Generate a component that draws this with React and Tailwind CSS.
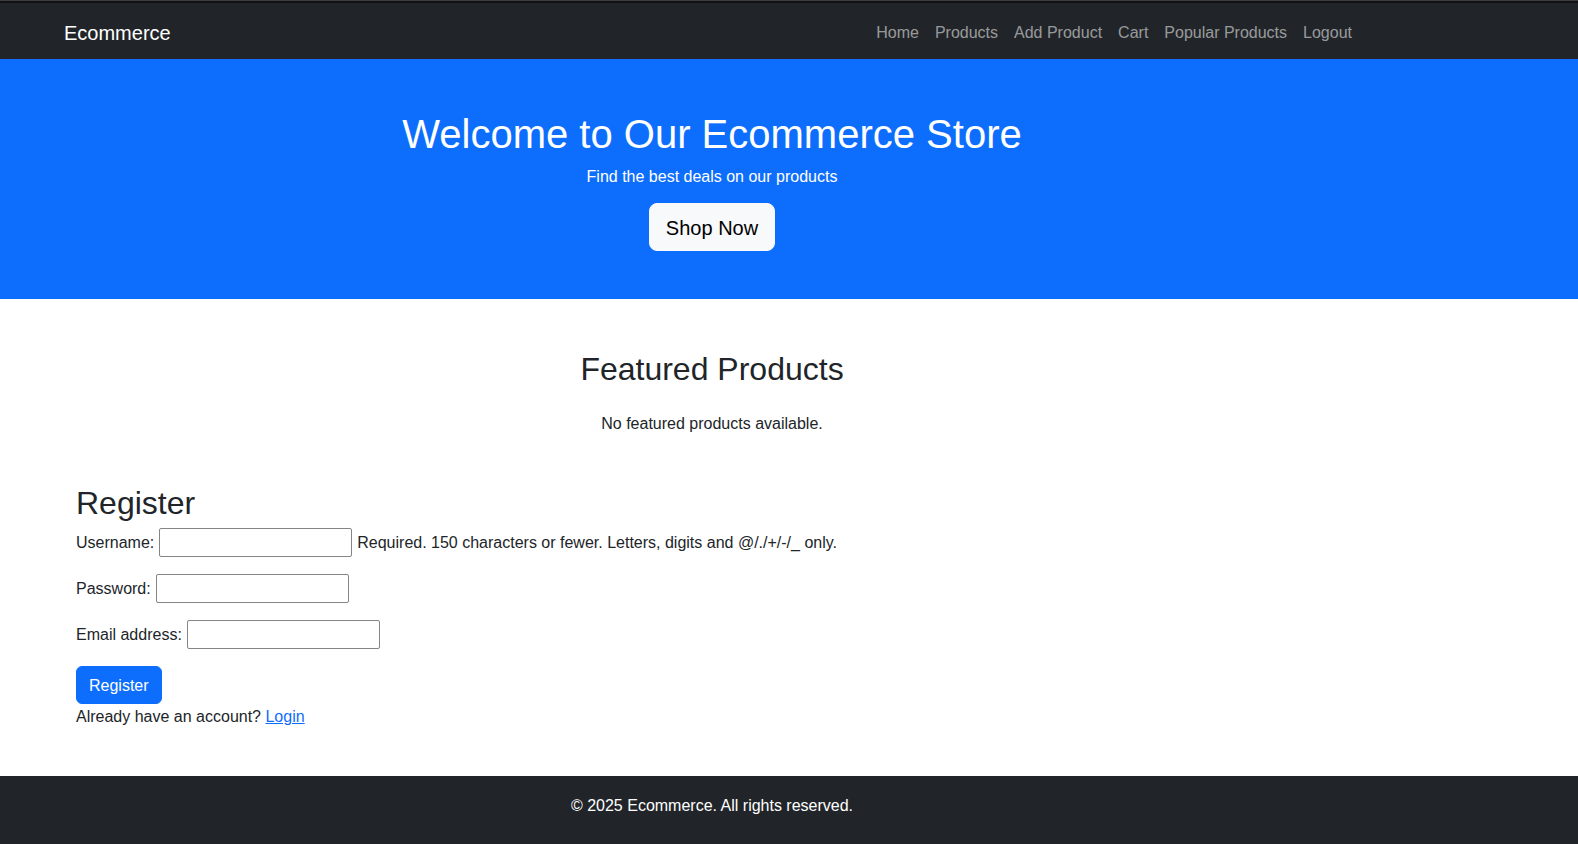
import React from 'react';

const links = ['Home', 'Products', 'Add Product', 'Cart', 'Popular Products', 'Logout'];

function Field({ label, help }) {
  return (
    <p className="flex items-center h-[30px] mb-4">
      <label>{label}</label>
      <input type="text" className="ml-[5px] w-[193px] h-[29px] border border-[#858585] rounded-[2px] bg-white px-[2px] outline-none" />
      {help && <span className="ml-[5px]">{help}</span>}
    </p>
  );
}

export default function App() {
  return (
    <div className="min-h-screen bg-white font-['Liberation_Sans',Arial,sans-serif] text-base leading-6 text-[#212529]">
      <div className="h-px bg-[#3c3c3c]" />
      <div className="h-[2px] bg-[#121212]" />

      <nav className="bg-[#212529] py-2">
        <div className="w-[1320px] ml-[52px] px-3 flex items-center justify-between">
          <a href="#" className="text-xl leading-[30px] pt-[7px] pb-[3px] text-white">Ecommerce</a>
          <ul className="flex">
            {links.map((l) => (
              <li key={l}>
                <a href="#" className="block px-2 pt-[10px] pb-[6px] text-[#ffffff8c]">{l}</a>
              </li>
            ))}
          </ul>
        </div>
      </nav>

      <header className="bg-[#0d6efd] py-12 text-white">
        <div className="w-[1320px] ml-[52px] px-3 text-center">
          <h1 className="text-[40px] leading-[48px] pt-[3px] mb-[5px] font-normal">Welcome to Our Ecommerce Store</h1>
          <p className="pt-[2px] mb-[14px]">Find the best deals on our products</p>
          <a href="#" className="inline-block bg-[#f8f9fa] border border-[#f8f9fa] text-black text-xl leading-[30px] px-4 pt-[9px] pb-[7px] rounded-lg">
            Shop Now
          </a>
        </div>
      </header>

      <section className="w-[1320px] ml-[52px] px-3 mt-12 text-center">
        <h2 className="text-[32px] leading-[38.4px] pt-[3px] mb-6 font-normal">Featured Products</h2>
        <p>No featured products available.</p>
      </section>

      <main className="w-[1320px] ml-[52px] px-3 mt-[45px] mb-12">
        <div className="px-3">
          <h2 className="text-[32px] leading-[38.4px] pt-[3px] mb-[5px] font-normal">Register</h2>
          <form>
            <Field label="Username:" help="Required. 150 characters or fewer. Letters, digits and @/./+/-/_ only." />
            <Field label="Password:" />
            <Field label="Email address:" />
            <button type="button" className="bg-[#0d6efd] border border-[#0d6efd] text-white px-3 pt-[7px] pb-[5px] rounded-md leading-6">
              Register
            </button>
          </form>
          <p className="pt-px -mb-px">
            Already have an account? <a href="#" className="text-[#0d6efd] underline">Login</a>
          </p>
        </div>
      </main>

      <footer className="bg-[#212529] text-white pt-[18px] pb-[26px]">
        <div className="w-[1320px] ml-[52px] px-3 text-center">
          <p>© 2025 Ecommerce. All rights reserved.</p>
        </div>
      </footer>
    </div>
  );
}
